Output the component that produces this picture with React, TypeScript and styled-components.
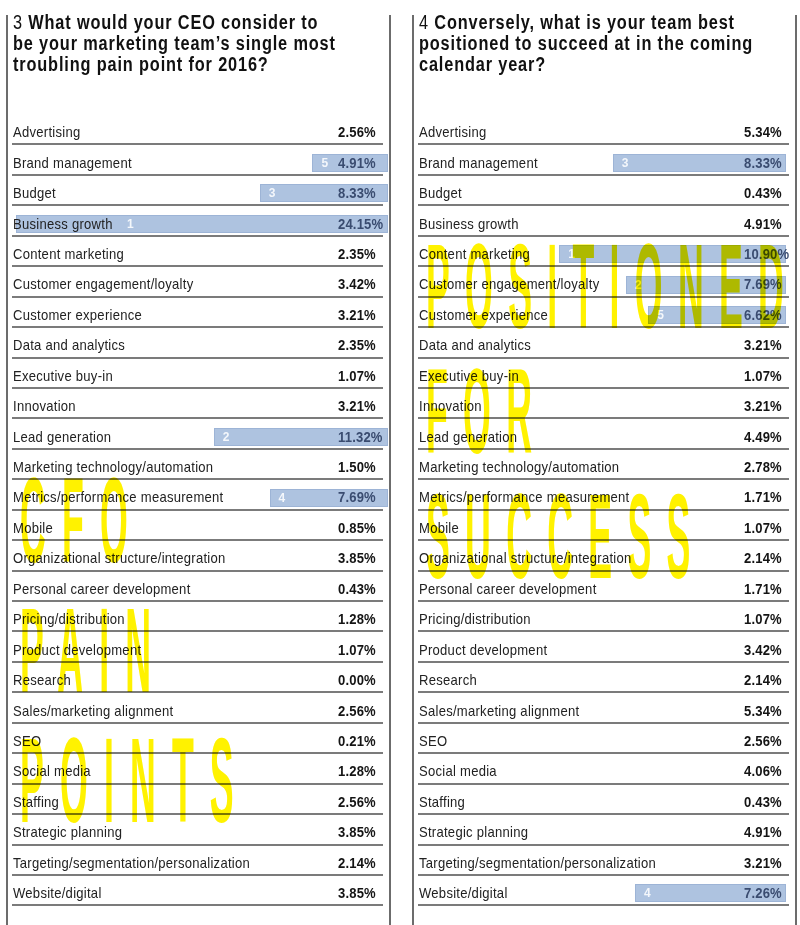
import React from 'react'
import styled, { createGlobalStyle } from 'styled-components'

const GlobalStyle = createGlobalStyle`
  html, body {
    margin: 0;
    padding: 0;
    background: #fff;
  }
  body {
    font-family: 'Liberation Sans', Arial, sans-serif;
    color: #1a1a1a;
  }
`

const Page = styled.div`
  display: flex;
  gap: 21px;
  padding: 15px 0 0 6px;
  width: 800px;
  height: 925px;
  box-sizing: border-box;
  overflow: hidden;
`

const Column = styled.section`
  position: relative;
  width: 385px;
  height: 920px;
  box-sizing: border-box;
  border-left: 2px solid #6c6c6c;
  border-right: 2px solid #6c6c6c;
  padding: 0 6px 0 4px;
`

// the print face is a condensed grotesque, so the sans is squeezed sideways
const Title = styled.h2`
  margin: -3px 0 40px 1px;
  font-size: 20px;
  line-height: 21px;
  font-weight: 700;
  letter-spacing: 1.05px;
  color: #111;
  white-space: nowrap;
  transform: scaleX(0.815);
  transform-origin: 0 0;

  span {
    font-weight: 400;
  }
`

const List = styled.div`
  display: flex;
  flex-direction: column;
`

const Row = styled.div`
  position: relative;
  display: grid;
  grid-template-columns: 325px 1fr;
  align-items: center;
  height: 30.44px;
  box-sizing: border-box;
  padding: 6px 0 0 1px;
  border-bottom: 2px solid #7b7b7b;
  font-size: 15px;
  line-height: 18px;
`

const Label = styled.span`
  position: relative;
  z-index: 1;
  display: inline-block;
  letter-spacing: 0.3px;
  color: #222;
  white-space: nowrap;
  transform: scaleX(0.87);
  transform-origin: 0 50%;
`

const Value = styled.span<{ $inBar: boolean }>`
  position: relative;
  z-index: 1;
  display: inline-block;
  font-weight: 700;
  letter-spacing: 0.2px;
  color: ${(p) => (p.$inBar ? '#3a4c70' : '#141414')};
  white-space: nowrap;
  transform: scaleX(0.87);
  transform-origin: 0 50%;
`

const Bar = styled.div<{ $overhang: number }>`
  position: absolute;
  right: ${(p) => -p.$overhang}px;
  top: 8.5px;
  height: 18px;
  box-sizing: border-box;
  background: #aec3e0;
  border: 1px solid #9db4d6;
  z-index: 0;
`

const Rank = styled.span`
  position: absolute;
  top: 1px;
  font-size: 12px;
  line-height: 15px;
  font-weight: 700;
  color: #f4f7fb;
`

const Overlay = styled.div<{ $top: number; $pitch: number }>`
  position: absolute;
  left: 12px;
  top: ${(p) => p.$top}px;
  z-index: 5;
  pointer-events: none;
  mix-blend-mode: multiply;
  display: flex;
  flex-direction: column;
  gap: ${(p) => p.$pitch}px;
`

const Word = styled.div<{ $spacing: number }>`
  height: 0;
  font-weight: 700;
  font-size: 42px;
  line-height: 1;
  letter-spacing: ${(p) => p.$spacing}px;
  color: #fff200;
  white-space: nowrap;
  transform: scale(0.85, 2.85);
  transform-origin: 0 0;
`

interface Item {
  label: string
  pct: string
  rank?: number
  rankAt?: number
}

const painPoints: Item[] = [
  { label: 'Advertising', pct: '2.56%' },
  { label: 'Brand management', pct: '4.91%', rank: 5 },
  { label: 'Budget', pct: '8.33%', rank: 3 },
  { label: 'Business growth', pct: '24.15%', rank: 1, rankAt: 110 },
  { label: 'Content marketing', pct: '2.35%' },
  { label: 'Customer engagement/loyalty', pct: '3.42%' },
  { label: 'Customer experience', pct: '3.21%' },
  { label: 'Data and analytics', pct: '2.35%' },
  { label: 'Executive buy-in', pct: '1.07%' },
  { label: 'Innovation', pct: '3.21%' },
  { label: 'Lead generation', pct: '11.32%', rank: 2 },
  { label: 'Marketing technology/automation', pct: '1.50%' },
  { label: 'Metrics/performance measurement', pct: '7.69%', rank: 4 },
  { label: 'Mobile', pct: '0.85%' },
  { label: 'Organizational structure/integration', pct: '3.85%' },
  { label: 'Personal career development', pct: '0.43%' },
  { label: 'Pricing/distribution', pct: '1.28%' },
  { label: 'Product development', pct: '1.07%' },
  { label: 'Research', pct: '0.00%' },
  { label: 'Sales/marketing alignment', pct: '2.56%' },
  { label: 'SEO', pct: '0.21%' },
  { label: 'Social media', pct: '1.28%' },
  { label: 'Staffing', pct: '2.56%' },
  { label: 'Strategic planning', pct: '3.85%' },
  { label: 'Targeting/segmentation/personalization', pct: '2.14%' },
  { label: 'Website/digital', pct: '3.85%' },
]

const strengths: Item[] = [
  { label: 'Advertising', pct: '5.34%' },
  { label: 'Brand management', pct: '8.33%', rank: 3 },
  { label: 'Budget', pct: '0.43%' },
  { label: 'Business growth', pct: '4.91%' },
  { label: 'Content marketing', pct: '10.90%', rank: 1 },
  { label: 'Customer engagement/loyalty', pct: '7.69%', rank: 2 },
  { label: 'Customer experience', pct: '6.62%', rank: 5 },
  { label: 'Data and analytics', pct: '3.21%' },
  { label: 'Executive buy-in', pct: '1.07%' },
  { label: 'Innovation', pct: '3.21%' },
  { label: 'Lead generation', pct: '4.49%' },
  { label: 'Marketing technology/automation', pct: '2.78%' },
  { label: 'Metrics/performance measurement', pct: '1.71%' },
  { label: 'Mobile', pct: '1.07%' },
  { label: 'Organizational structure/integration', pct: '2.14%' },
  { label: 'Personal career development', pct: '1.71%' },
  { label: 'Pricing/distribution', pct: '1.07%' },
  { label: 'Product development', pct: '3.42%' },
  { label: 'Research', pct: '2.14%' },
  { label: 'Sales/marketing alignment', pct: '5.34%' },
  { label: 'SEO', pct: '2.56%' },
  { label: 'Social media', pct: '4.06%' },
  { label: 'Staffing', pct: '0.43%' },
  { label: 'Strategic planning', pct: '4.91%' },
  { label: 'Targeting/segmentation/personalization', pct: '3.21%' },
  { label: 'Website/digital', pct: '7.26%', rank: 4 },
]

interface ChartProps {
  num: string
  lines: string[]
  items: Item[]
  scale: number
  overhang: number
  words: string[]
  wordsTop: number
  wordsPitch: number
  spacing: number
}

const Chart = ({ num, lines, items, scale, overhang, words, wordsTop, wordsPitch, spacing }: ChartProps) => (
  <Column>
    <Title>
      <span>{num} </span>
      {lines.map((l, i) => (
        <React.Fragment key={i}>
          {l}
          {i < lines.length - 1 && <br />}
        </React.Fragment>
      ))}
    </Title>
    <List>
      {items.map((it) => (
        <Row key={it.label}>
          {it.rank && (
            <Bar $overhang={overhang} style={{ width: parseFloat(it.pct) * scale }}>
              <Rank style={{ left: it.rankAt ?? 8 }}>{it.rank}</Rank>
            </Bar>
          )}
          <Label>{it.label}</Label>
          <Value $inBar={!!it.rank}>{it.pct}</Value>
        </Row>
      ))}
    </List>
    <Overlay $top={wordsTop} $pitch={wordsPitch}>
      {words.map((w) => (
        <Word key={w} $spacing={spacing}>
          {w}
        </Word>
      ))}
    </Overlay>
  </Column>
)

const App = () => (
  <>
    <GlobalStyle />
    <Page>
      <Chart
        num="3"
        lines={['What would your CEO consider to', 'be your marketing team’s single most', 'troubling pain point for 2016?']}
        items={painPoints}
        scale={15.4}
        overhang={5}
        words={['CFO', 'PAIN', 'POINTS']}
        wordsTop={447}
        wordsPitch={130}
        spacing={19}
      />
      <Chart
        num="4"
        lines={['Conversely, what is your team best', 'positioned to succeed at in the coming', 'calendar year?']}
        items={strengths}
        scale={20.8}
        overhang={-3}
        words={['POSITIONED', 'FOR', 'SUCCESS']}
        wordsTop={213}
        wordsPitch={125}
        spacing={18}
      />
    </Page>
  </>
)

export default App
